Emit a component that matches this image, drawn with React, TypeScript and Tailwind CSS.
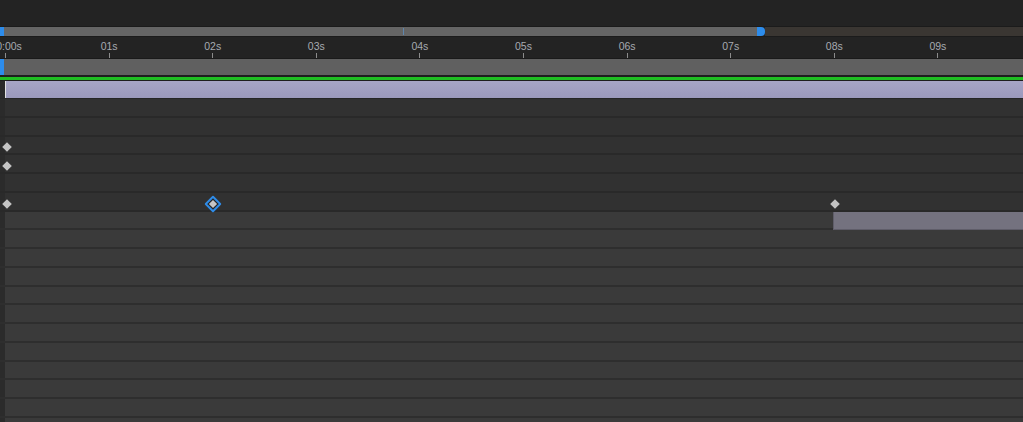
const PX_PER_SEC = 103.6;
const ORIGIN = 5;

const tx = (t: number) => ORIGIN + PX_PER_SEC * t;

const labels = ["0:00s", "01s", "02s", "03s", "04s", "05s", "06s", "07s", "08s", "09s"];

// row heights alternate to keep the ~18.75px pitch of the reference
const rowHeights = Array.from({ length: 18 }, (_, i) =>
  Math.round(99 + 18.75 * (i + 1)) - Math.round(99 + 18.75 * i)
);

function Diamond({ x, y }: { x: number; y: number }) {
  return (
    <svg className="absolute" style={{ left: x - 6, top: y - 6 }} width="12" height="12" viewBox="0 0 12 12">
      <path d="M6 1.2 L10.8 6 L6 10.8 L1.2 6 Z" fill="#c4c4c4" />
    </svg>
  );
}

function SelectedDiamond({ x, y }: { x: number; y: number }) {
  return (
    <svg className="absolute" style={{ left: x - 9, top: y - 9 }} width="18" height="18" viewBox="0 0 18 18">
      <path d="M9 1.8 L16.2 9 L9 16.2 L1.8 9 Z" fill="#262626" stroke="#2f8ce8" strokeWidth="2" strokeLinejoin="round" />
      <path d="M9 4.9 L13.1 9 L9 13.1 L4.9 9 Z" fill="#c6c6c6" />
    </svg>
  );
}

export default function App(): React.ReactElement {
  return (
    <div className="w-[1023px] h-[422px] overflow-hidden bg-[#232323] flex flex-col relative font-['Liberation_Sans',sans-serif]">
      <div className="h-[26px] shrink-0 bg-[#232323]" />

      {/* scroll / zoom bar */}
      <div className="h-[11px] shrink-0 border-t border-b border-[#1b1b1b] flex relative">
        <div className="w-[4px] bg-[#2d8ceb]" />
        <div className="w-[753px] bg-[#656565]" />
        <div className="w-[8px] bg-[#2d8ceb] rounded-r-[4px]" />
        <div className="flex-1 bg-[#3a3632]" />
        <div className="absolute left-[403px] top-[1px] w-[1px] h-[7px] bg-[#5e86ad]" />
      </div>

      {/* ruler */}
      <div className="h-[22px] shrink-0 bg-[#232323] border-b border-[#1a1a1a] relative">
        {labels.map((l, i) => (
          <div key={l}>
            <span
              className="absolute top-[3px] text-[10.5px] leading-[12px] text-[#a6aab1] -translate-x-1/2 whitespace-nowrap"
              style={{ left: i === 0 ? 9 : tx(i) + 0.5 }}
            >
              {l}
            </span>
            <div className="absolute top-[16px] w-[1px] h-[5px] bg-[#8c8c8c]" style={{ left: Math.round(tx(i)) }} />
          </div>
        ))}
      </div>

      {/* work area bar */}
      <div className="h-[16px] shrink-0 bg-[#606060] flex">
        <div className="w-[4px] bg-[#2d8ceb]" />
      </div>
      <div className="h-[2px] shrink-0 bg-[#1e1e1e]" />
      <div className="h-[3px] shrink-0 bg-[#1fbe22]" />
      <div className="h-[1px] shrink-0 bg-[#1e1e1e]" />

      {/* layer bar */}
      <div className="h-[18px] shrink-0 flex border-b border-[#262626]">
        <div className="w-[5px] bg-[#2a2a2a]" />
        <div className="w-[1px] bg-[#e2e2e2]" />
        <div className="flex-1 bg-gradient-to-b from-[#a7a5c6] to-[#9b99bc]" />
      </div>

      {/* property rows */}
      <div className="flex flex-col relative">
        {rowHeights.map((h, i) => (
          <div
            key={i}
            className={`${h === 19 ? "h-[19px]" : "h-[18px]"} shrink-0 flex border-b-2 ${
              i < 6 ? "border-[#292929]" : "border-[#2e2e2e]"
            }`}
          >
            <div className="w-[5px] bg-[#2b2b2b]" />
            <div className={`flex-1 ${i < 6 ? "bg-[#313131]" : "bg-[#3a3a3a]"}`} />
          </div>
        ))}
      </div>

      {/* layer bar segment at 8s */}
      <div className="absolute left-[833px] top-[212px] w-[190px] h-[18px] bg-[#74727f] border-l border-b border-[#5f5d69]" />

      {/* keyframes */}
      <Diamond x={6.5} y={146.5} />
      <Diamond x={6.5} y={165.5} />
      <Diamond x={6.5} y={203.5} />
      <Diamond x={834.5} y={203.5} />
      <SelectedDiamond x={212.5} y={203.5} />
    </div>
  );
}
